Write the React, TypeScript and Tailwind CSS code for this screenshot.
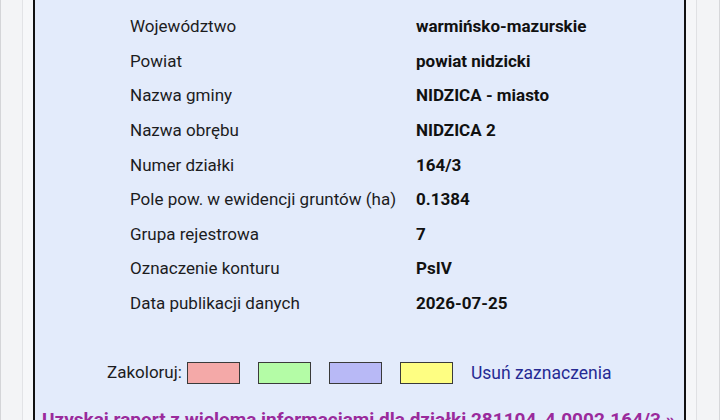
const rows: [string, string][] = [
  ['Województwo', 'warmińsko-mazurskie'],
  ['Powiat', 'powiat nidzicki'],
  ['Nazwa gminy', 'NIDZICA - miasto'],
  ['Nazwa obrębu', 'NIDZICA 2'],
  ['Numer działki', '164/3'],
  ['Pole pow. w ewidencji gruntów (ha)', '0.1384'],
  ['Grupa rejestrowa', '7'],
  ['Oznaczenie konturu', 'PsIV'],
  ['Data publikacji danych', '2026-07-25'],
];

const swatches = ['bg-[#f4a9a8]', 'bg-[#b4fca6]', 'bg-[#b8b9f6]', 'bg-[#fefe82]'];

export default function App() {
  return (
    <div className="h-[420px] w-[720px] overflow-hidden bg-[#f2f3f5] font-['Roboto',sans-serif] text-[#1c1c1e]">
      <div className="flex h-full">
        {/* left gutter */}
        <div className="flex w-[33px] shrink-0">
          <div className="w-[1px] bg-[#d4d5d8]" />
          <div className="w-[21px] bg-[#f3f4f6]" />
          <div className="w-[1px] bg-[#e2e3e6]" />
          <div className="flex-1 bg-[#f6f7f9]" />
        </div>

        {/* data panel */}
        <div className="w-[653px] shrink-0 border-x-2 border-[#111] bg-[#e3ebfb]">
          <div className="-mt-[25px]">
            <div className="flex h-[34.6px] items-center pl-[95px] text-[17px] font-bold">
              <span className="pl-[14px]">Dane działki</span>
            </div>
            {rows.map(([label, value]) => (
              <div key={label} className="grid h-[34.6px] grid-cols-[286px_1fr] items-center pl-[95px] text-[17px]">
                <span>{label}</span>
                <span className="font-bold text-[#111]">{value}</span>
              </div>
            ))}
          </div>

          <div className="mt-[40px] flex h-[24px] items-center pl-[72px] text-[17px]">
            <span className="mr-[5px]">Zakoloruj:</span>
            {swatches.map((c) => (
              <div key={c} className={`mr-[18px] h-[22px] w-[53px] border-[1.5px] border-[#3a3a3a] ${c}`} />
            ))}
            <a className="text-[17.5px] text-[#262a93]">Usuń zaznaczenia</a>
          </div>

          <div className="mt-[23px] pl-[7px] text-[19px] font-bold leading-[24px] text-[#9a2a9c] whitespace-nowrap">
            Uzyskaj raport z wieloma informacjami dla działki 281104_4.0002.164/3 »
          </div>
        </div>

        {/* right gutter */}
        <div className="flex flex-1">
          <div className="w-[10px] bg-[#f5f6f8]" />
          <div className="w-[1px] bg-[#e0e1e4]" />
          <div className="flex-1 bg-[#f3f4f6]" />
          <div className="w-[1px] bg-[#d6d7da]" />
        </div>
      </div>
    </div>
  );
}
